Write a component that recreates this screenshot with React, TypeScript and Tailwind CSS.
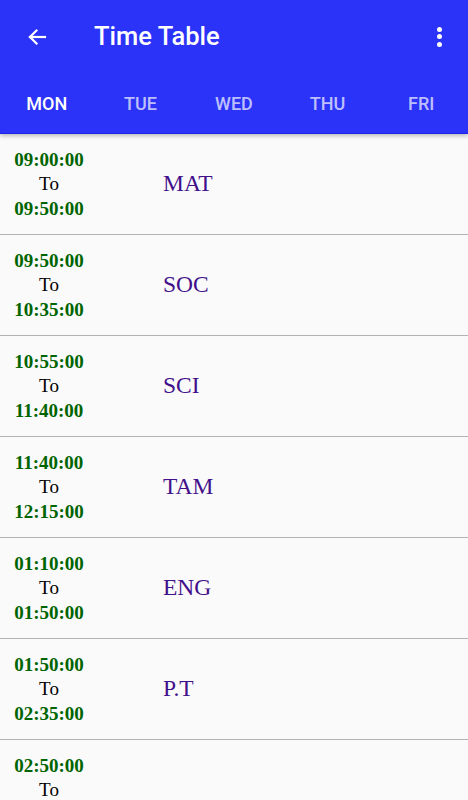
import React from "react";

const periods = [
  { from: "09:00:00", to: "09:50:00", subject: "MAT" },
  { from: "09:50:00", to: "10:35:00", subject: "SOC" },
  { from: "10:55:00", to: "11:40:00", subject: "SCI" },
  { from: "11:40:00", to: "12:15:00", subject: "TAM" },
  { from: "01:10:00", to: "01:50:00", subject: "ENG" },
  { from: "01:50:00", to: "02:35:00", subject: "P.T" },
  { from: "02:50:00", to: "03:30:00", subject: "" },
];

const days = ["MON", "TUE", "WED", "THU", "FRI"];

export default function App() {
  return (
    <div className="h-[800px] w-[468px] overflow-hidden bg-[#fafafa] font-['Roboto',sans-serif]">
      {/* app bar + tabs */}
      <div className="relative z-10 bg-[#2b33f8] shadow-[0_2px_4px_rgba(0,0,0,0.25)]">
        <div className="flex h-[70px] items-center pt-[3px]">
          <div className="flex w-[94px] items-center pl-[25px]">
            <svg width="24" height="24" viewBox="0 0 24 24" fill="none" stroke="white" strokeWidth="2.2" strokeLinecap="square">
              <path d="M20 12H5" />
              <path d="M11.5 5.5L5 12l6.5 6.5" />
            </svg>
          </div>
          <h1 className="flex-1 text-[25.5px] font-medium text-white">Time Table</h1>
          <div className="flex w-[52px] flex-col items-center gap-[2.5px] pr-[6px]">
            <span className="h-[5px] w-[5px] rounded-full bg-white" />
            <span className="h-[5px] w-[5px] rounded-full bg-white" />
            <span className="h-[5px] w-[5px] rounded-full bg-white" />
          </div>
        </div>
        <div className="flex h-[64px] border-b border-[#1c22e6]">
          {days.map((d, i) => (
            <div
              key={d}
              className={
                "flex flex-1 items-center justify-center pt-[4px] text-[18px] font-medium " +
                (i === 0 ? "text-white" : "text-white/70")
              }
            >
              {d}
            </div>
          ))}
        </div>
      </div>

      {/* periods */}
      <div className="flex flex-col">
        {periods.map((p) => (
          <div key={p.from} className="flex h-[101px] shrink-0 items-center border-b border-[#b3b3b3] font-['Liberation_Serif',serif]">
            <div className="flex w-[150px] flex-col items-start pl-[13px] pt-[1px]">
              <div className="flex w-[72px] flex-col items-center leading-[24.5px]">
                <span className="text-[19px] font-bold text-[#006400]">{p.from}</span>
                <span className="text-[19px] text-black">To</span>
                <span className="text-[19px] font-bold text-[#006400]">{p.to}</span>
              </div>
            </div>
            <div className="pl-[13px] text-[23.5px] text-[#42108a]">{p.subject}</div>
          </div>
        ))}
      </div>
    </div>
  );
}
